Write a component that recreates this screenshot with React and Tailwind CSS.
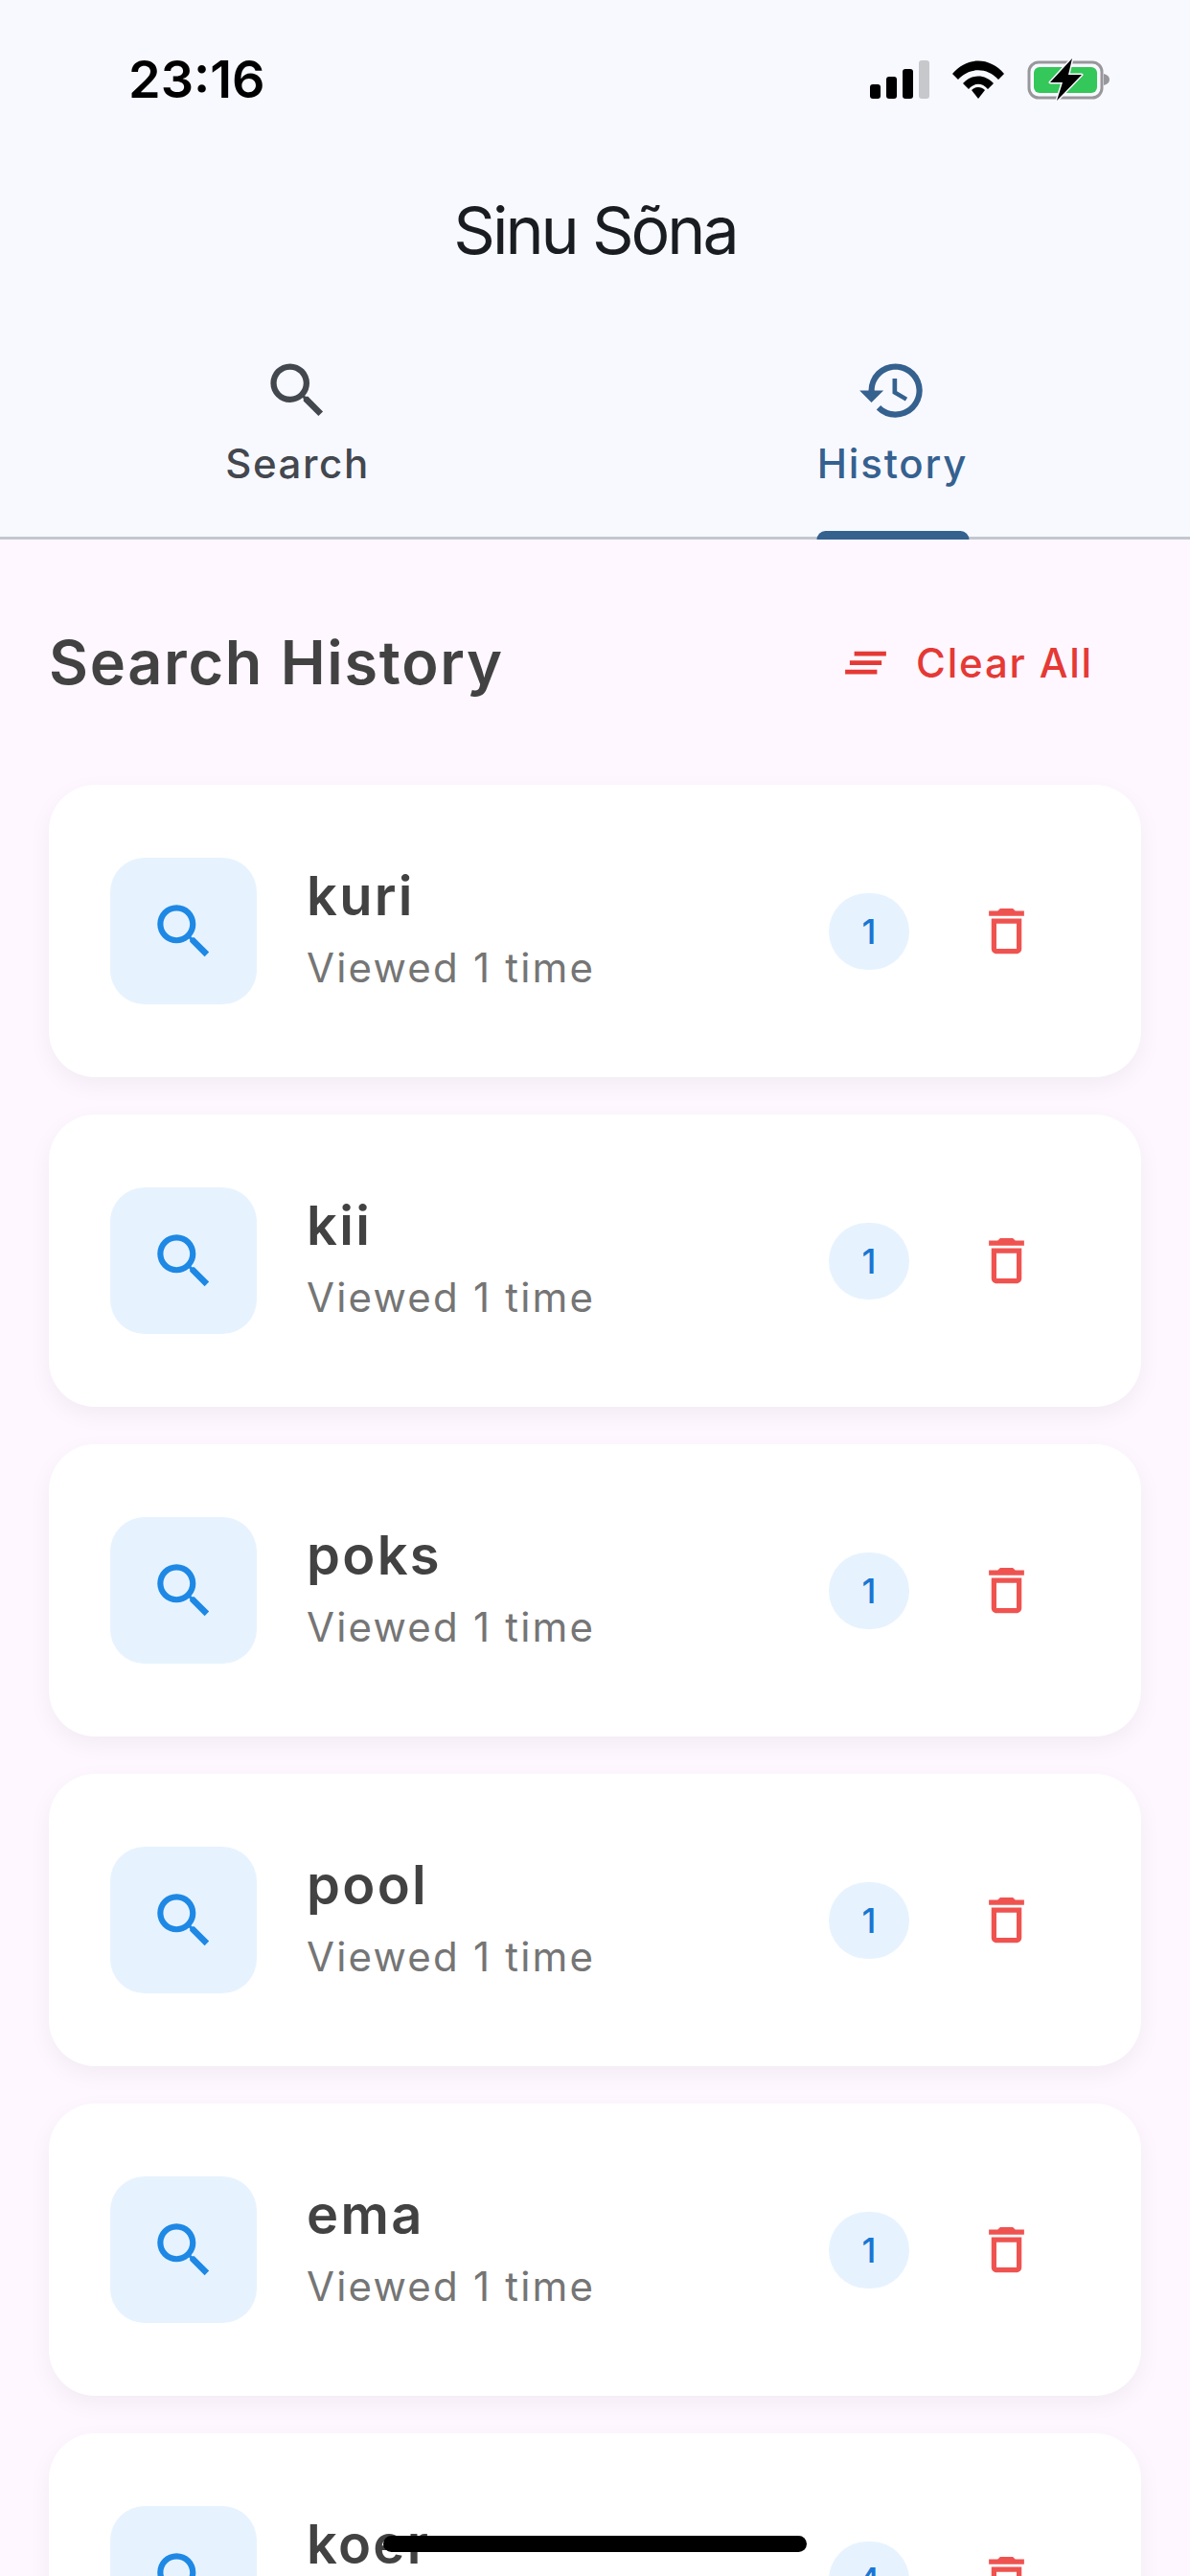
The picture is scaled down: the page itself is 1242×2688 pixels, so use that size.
import { MdClearAll, MdDeleteOutline, MdHistory, MdSearch } from "react-icons/md";

const items = [
  { word: "kuri", count: 1 },
  { word: "kii", count: 1 },
  { word: "poks", count: 1 },
  { word: "pool", count: 1 },
  { word: "ema", count: 1 },
  { word: "koer", count: 4 },
];

const StatusIcons = () => (
  <div className="flex items-center">
    <svg width="62" height="40" viewBox="0 0 62 40" className="block">
      <rect x="0" y="25" width="11" height="15" rx="3" fill="#000" />
      <rect x="17" y="17" width="11" height="23" rx="3" fill="#000" />
      <rect x="34" y="9" width="11" height="31" rx="3" fill="#000" />
      <rect x="51" y="0" width="11" height="40" rx="3" fill="#c7c8cc" />
    </svg>
    <svg width="54" height="40" viewBox="0 0 54 40" className="ml-6 block">
      <path d="M0 14 C15 -4 39 -4 54 14 L48 20 C36 7 18 7 6 20 Z" fill="#000" />
      <path d="M11 24 C20 14 34 14 43 24 L37 30 C31 23 23 23 17 30 Z" fill="#000" />
      <path d="M20 31 C24 27 30 27 34 31 L27 40 Z" fill="#000" />
    </svg>
    <svg width="86" height="44" viewBox="0 0 86 44" className="ml-6 block">
      <rect x="2" y="4" width="76" height="37" rx="10" fill="none" stroke="#97979c" strokeWidth="3" />
      <rect x="7" y="9" width="66" height="27" rx="6" fill="#34c759" />
      <path d="M80 16 C84 17 86 19 86 22 C86 25 84 27 80 28 Z" fill="#97979c" />
      <path d="M47 0 L24 25 L37 25 L31 44 L57 17 L43 17 Z" fill="#000" stroke="#f8f9ff" strokeWidth="3" strokeLinejoin="round" paintOrder="stroke" />
    </svg>
  </div>
);

const HistoryCard = ({ word, count }) => (
  <div className="flex h-[305px] items-center rounded-[48px] bg-white pl-[64px] pr-[109px] shadow-[0_8px_24px_rgba(0,0,0,0.05)]">
    <div className="flex h-[153px] w-[153px] shrink-0 items-center justify-center rounded-[36px] bg-[#e6f3fe]">
      <MdSearch size={74} color="#1e88e5" />
    </div>
    <div className="ml-[52px] flex-1 pb-[7px]">
      <div className="text-[56px] leading-[66px] font-semibold tracking-[2.3px] text-[#424242]">{word}</div>
      <div className="mt-[17px] text-[42px] leading-[50px] tracking-[2.2px] text-[#757575]">Viewed 1 time</div>
    </div>
    <div className="flex h-[80px] w-[84px] items-center justify-center rounded-[40px] bg-[#e6f3fe] text-[36px] font-medium text-[#1976d2]">
      {count}
    </div>
    <div className="ml-[70px] flex w-[63px] justify-center">
      <MdDeleteOutline size={63} color="#ef5350" />
    </div>
  </div>
);

export default function App() {
  return (
    <div className="relative h-[2688px] w-[1242px] overflow-hidden bg-[#fef7ff] font-['Inter',sans-serif]">
      <header className="bg-[#f8f9ff]">
        <div className="flex h-[165px] items-center justify-between pl-[134px] pr-[84px]">
          <span className="text-[54px] leading-none font-semibold text-black">23:16</span>
          <StatusIcons />
        </div>
        <h1 className="mt-[35px] text-center text-[68px] leading-[80px] font-normal tracking-[-3px] text-[#191c20]">Sinu Sõna</h1>
        <nav className="mt-[43px] flex h-[240px] border-b-[3px] border-[#c3c7cf]">
          <div className="flex flex-1 flex-col items-center pt-[47px] text-[#43474e]">
            <MdSearch size={75} />
            <span className="mt-[14px] text-[42px] leading-[50px] font-medium tracking-[1.6px]">Search</span>
          </div>
          <div className="relative flex flex-1 flex-col items-center pt-[47px] text-[#35618f]">
            <MdHistory size={75} />
            <span className="mt-[14px] text-[42px] leading-[50px] font-medium tracking-[1.8px]">History</span>
            <div className="absolute bottom-[-3px] left-1/2 h-[9px] w-[159px] -translate-x-1/2 rounded-t-[9px] bg-[#35618f]" />
          </div>
        </nav>
      </header>

      <main className="px-[51px]">
        <div className="flex h-[256px] items-center justify-between">
          <h2 className="text-[63px] font-semibold tracking-[1.7px] text-[#424242]">Search History</h2>
          <div className="mr-[50px] flex items-center text-[#e53935]">
            <MdClearAll size={57} />
            <span className="ml-[24px] text-[42px] font-medium tracking-[1.8px]">Clear All</span>
          </div>
        </div>
        <div className="flex flex-col gap-[39px]">
          {items.map((item) => (
            <HistoryCard key={item.word} word={item.word} count={item.count} />
          ))}
        </div>
      </main>

      <div className="absolute left-[400px] top-[2646px] h-[17px] w-[442px] rounded-full bg-black" />
    </div>
  );
}
